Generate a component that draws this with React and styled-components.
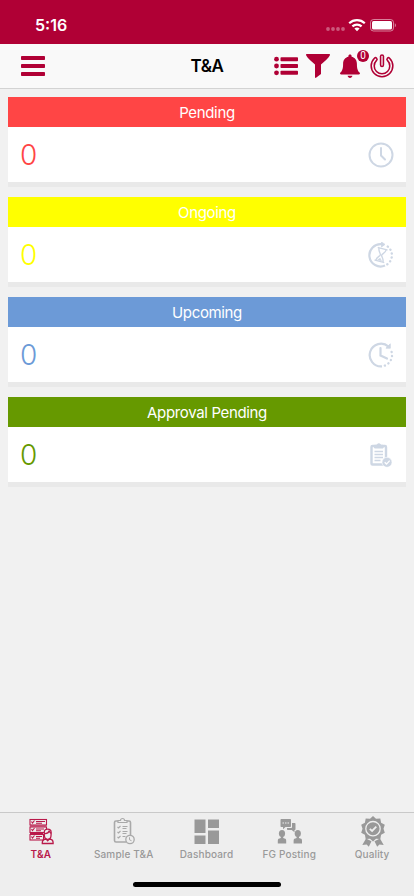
import React from "react";
import styled, { createGlobalStyle } from "styled-components";

const GlobalStyle = createGlobalStyle`
  * {
    box-sizing: border-box;
  }

  body {
    margin: 0;
    background: #f1f1f1;
    font-family: Inter, "Liberation Sans", sans-serif;
  }
`;

const Screen = styled.div`
  display: flex;
  flex-direction: column;
  width: 414px;
  height: 896px;
  overflow: hidden;
  background: #f1f1f1;
`;

const StatusBar = styled.div`
  display: flex;
  justify-content: space-between;
  height: 44px;
  padding: 15px 17px 0 35px;
  background: #b00035;
  color: #fff;
`;

const Time = styled.span`
  font-size: 16px;
  font-weight: 600;
  line-height: 20px;
`;

const NavBar = styled.header`
  display: grid;
  grid-template-columns: 1fr auto 1fr;
  align-items: center;
  height: 45px;
  padding: 0 20px 0 21px;
  background: #f9f9f9;
  border-bottom: 1px solid #d3d3d3;
  color: #b00035;
`;

const Title = styled.h1`
  margin: 0 1px 0 0;
  color: #000;
  font-size: 17px;
  font-weight: 600;
  letter-spacing: -0.5px;
`;

const NavActions = styled.div`
  display: flex;
  justify-content: flex-end;
  gap: 8px;
`;

const IconButton = styled.button`
  position: relative;
  display: block;
  width: 24px;
  height: 24px;
  padding: 0;
  border: 0;
  background: none;
  color: inherit;

  svg {
    display: block;
  }
`;

const Badge = styled.span`
  position: absolute;
  top: -4px;
  right: -7px;
  width: 12px;
  height: 12px;
  border-radius: 50%;
  background: #b00035;
  color: #fff;
  font-family: Roboto, sans-serif;
  font-size: 10px;
  line-height: 12px;
  text-align: center;
`;

const Content = styled.main`
  flex: 1;
  display: flex;
  flex-direction: column;
  gap: 10px;
  padding: 8px;
`;

const Card = styled.section`
  color: ${(props) => props.$color};
  background: #fff;
  border-bottom: 5px solid #e9e9e9;
`;

const CardHeader = styled.h2`
  height: 30px;
  margin: 0;
  padding-top: 1px;
  background: ${(props) => props.$color};
  color: #fff;
  font-size: 15px;
  font-weight: 400;
  line-height: 30px;
  letter-spacing: -0.35px;
  text-align: center;
`;

const CardBody = styled.div`
  display: flex;
  align-items: center;
  justify-content: space-between;
  height: 55px;
  padding: 0 12px;
`;

const Count = styled.span`
  font-size: 28px;
  font-weight: 350;
  line-height: 30px;
`;

const TabBar = styled.nav`
  display: grid;
  grid-template-columns: repeat(5, 1fr);
  height: 70px;
  padding-top: 3px;
  background: #eee;
  border-top: 1px solid #c9c9c9;
`;

const Tab = styled.a`
  display: flex;
  flex-direction: column;
  align-items: center;
  color: ${(props) => (props.$active ? "#b9194a" : "#999")};

  svg {
    display: block;
  }
`;

const TabLabel = styled.span`
  padding-right: 1px;
  font-size: 10px;
  font-weight: ${(props) => (props.$active ? 600 : 500)};
  line-height: 12px;
  letter-spacing: 0.15px;
  white-space: nowrap;
`;

const HomeArea = styled.div`
  display: flex;
  justify-content: center;
  height: 14px;
  background: #eee;
`;

const HomeIndicator = styled.div`
  width: 148px;
  height: 5px;
  border-radius: 3px;
  background: #000;
`;

const StatusIcons = () => (
  <svg width="72" height="20" viewBox="0 0 72 20">
    <g fill="#fff" opacity="0.35">
      <circle cx="3" cy="14" r="1.9" />
      <circle cx="8" cy="14" r="1.9" />
      <circle cx="13" cy="14" r="1.9" />
      <circle cx="18" cy="14" r="1.9" />
    </g>
    <g fill="none" stroke="#fff" strokeWidth="2.2">
      <path d="M24.2 8.2a11.5 11.5 0 0 1 15.6 0" />
      <path d="M27.4 11.4a6.8 6.8 0 0 1 9.2 0" />
    </g>
    <path d="M29.4 13.6a3.8 3.8 0 0 1 5.2 0L32 16.2z" fill="#fff" />
    <rect x="45.5" y="4.5" width="23" height="11.5" rx="3" fill="none" stroke="#fff" opacity="0.5" />
    <rect x="47" y="6" width="20" height="8.5" rx="1.6" fill="#fff" />
    <path d="M69.8 8.2v4c1.6-.6 1.6-3.4 0-4z" fill="#fff" opacity="0.5" />
  </svg>
);

const MenuIcon = () => (
  <svg width="24" height="24" viewBox="0 0 24 24" fill="currentColor">
    <rect y="2" width="24" height="4" rx="0.8" />
    <rect y="10" width="24" height="4" rx="0.8" />
    <rect y="18" width="24" height="4" rx="0.8" />
  </svg>
);

const ListIcon = () => (
  <svg width="24" height="24" viewBox="0 0 24 24" fill="currentColor">
    <circle cx="2.5" cy="5.2" r="2.4" />
    <circle cx="2.5" cy="12" r="2.4" />
    <circle cx="2.5" cy="18.8" r="2.4" />
    <rect x="6.5" y="3.2" width="17.5" height="4" rx="0.8" />
    <rect x="6.5" y="10" width="17.5" height="4" rx="0.8" />
    <rect x="6.5" y="16.8" width="17.5" height="4" rx="0.8" />
  </svg>
);

const FilterIcon = () => (
  <svg width="24" height="24" viewBox="0 0 24 24" fill="currentColor">
    <path d="M.7 0h22.6c.7 0 .9.7.6 1.2-1 1.9-2.1 3.2-3.8 4.7L15 10.6V20L10 23.8c-.5.3-1 .1-1-.5V10.6L3.9 5.9C2.2 4.4 1.1 3.1.1 1.2-.2.7 0 0 .7 0z" />
  </svg>
);

const BellIcon = () => (
  <svg width="24" height="24" viewBox="0 0 24 24" fill="currentColor">
    <path d="M12 .4c1 0 1.6.7 1.6 1.6v.8c3.3.7 5.3 3.4 5.3 6.9 0 4.8.8 7.1 2.7 8.9.8.8.3 1.9-.8 1.9H3.2c-1.1 0-1.6-1.1-.8-1.9 1.900-1.800 2.700-4.100 2.700-8.900 0-3.500 2-6.200 5.300-6.900V2c0-.9.6-1.600 1.600-1.600z" />
    <path d="M9.600 21.800h4.800c-.3 1.300-1.200 2.100-2.400 2.100s-2.100-.8-2.400-2.100z" />
  </svg>
);

const PowerIcon = () => (
  <svg width="24" height="24" viewBox="0 0 24 24" fill="none" stroke="currentColor" strokeLinecap="round">
    <path d="M5.5 5.3A9.3 9.3 0 1 0 18.5 5.3" strokeWidth="4.6" />
    <path d="M5.5 5.3A9.3 9.3 0 1 0 18.5 5.3" stroke="#f9f9f9" strokeWidth="1.5" />
    <path d="M12 2.5v8.5" strokeWidth="4.4" />
    <path d="M12 2.5v8.5" stroke="#f9f9f9" strokeWidth="1.3" />
  </svg>
);

const CARD_ICON = "#ced7e4";

const ClockIcon = () => (
  <svg width="26" height="26" viewBox="0 0 26 26" fill="none" stroke={CARD_ICON} strokeWidth="2">
    <circle cx="13" cy="13" r="11.5" />
    <path d="M13 6v7.5l4 4" strokeLinecap="round" />
  </svg>
);

const HourglassIcon = () => (
  <svg width="26" height="26" viewBox="0 0 26 26" fill="none" stroke={CARD_ICON} strokeWidth="2.2">
    <path d="M17 23.6A11.2 11.2 0 1 1 14 2.2" />
    <path d="M13.5 0l3.5 2.4-3.5 2.6z" fill={CARD_ICON} strokeWidth="0.8" />
    <path d="M19 4A11.2 11.2 0 0 1 17 23.6" strokeDasharray="0.1 3.9" strokeDashoffset="-1" strokeLinecap="round" strokeWidth="2.4" />
    <g transform="rotate(15 13 13)" strokeWidth="1.4">
      <path d="M8.5 6.5h9M8.5 19.5h9" strokeLinecap="round" />
      <path d="M9.3 6.5c0 4 3 4.800 3 6.500s-3 2.500-3 6.500M16.700 6.500c0 4-3 4.800-3 6.500s3 2.500 3 6.500" />
      <path d="M11 18.500l2-2.200 2 2.200z" fill={CARD_ICON} strokeWidth="0.5" />
    </g>
  </svg>
);

const UpcomingIcon = () => (
  <svg width="26" height="26" viewBox="0 0 26 26" fill="none" stroke={CARD_ICON} strokeWidth="2.2">
    <path d="M14 24.3A11.3 11.3 0 1 1 20.5 4.6" />
    <path d="M22.3 1.8v4.4h-4.4z" fill={CARD_ICON} strokeWidth="0.8" />
    <path d="M23.3 9A11.3 11.3 0 0 1 14 24.3" strokeDasharray="0.1 4" strokeDashoffset="-1" strokeLinecap="round" strokeWidth="2.4" />
    <path d="M12.5 6v7.5l6.5 3" strokeLinecap="round" />
  </svg>
);

const ApprovalIcon = () => (
  <svg width="26" height="26" viewBox="0 0 26 26" fill="none" stroke={CARD_ICON}>
    <rect x="3.5" y="4" width="14.5" height="18.5" rx="1" strokeWidth="2.4" />
    <path d="M6.5 6V3.3h2.200a2.200 2.200 0 0 1 4.200 0h2.200V6z" fill={CARD_ICON} />
    <path d="M6.5 9.5h8.500M6.500 12.500h8.500M6.500 15.500h8.500M6.500 18.500h6" strokeWidth="1.5" />
    <circle cx="19" cy="20.3" r="5" fill={CARD_ICON} stroke="#fff" strokeWidth="0.6" />
    <path d="M16.7 20.3l1.800 1.800 3.200-3.500" stroke="#fff" strokeWidth="1.4" />
  </svg>
);

const TaskIcon = () => (
  <svg width="32" height="32" viewBox="0 0 32 32" fill="none" stroke="currentColor" strokeWidth="1.1">
    <rect x="5" y="3.5" width="16.5" height="5.5" />
    <rect x="5" y="11" width="16.5" height="5.5" />
    <rect x="5" y="18.5" width="13.5" height="5.5" />
    <path d="M6.5 5.5l1 1.5 2-2.500M6.500 13l1 1.500 2-2.500M6.500 20.500l1 1.500 2-2.500" />
    <path d="M11 5.500h9M11 7.300h6M11 13h8M11 14.800h5M11 20.500h6M11 22.300h4M5 10h16.500M5 17.500h13" />
    <path d="M19.3 18.5v-2.300c0-4 6.800-4 6.800 0v2.300c0 4-1.700 5-3.400 5s-3.400-1-3.400-5z" fill="#eee" strokeWidth="1.3" />
    <path d="M19.3 17.5c3 .3 4.400-1 4.900-2.500l1.900 2.500M17.300 27.500v-1c0-2.500 1.900-3.300 3.800-3.500l1.600 1.700 1.600-1.700c2 .2 3.800 1 3.800 3.500v1z" fill="#eee" strokeWidth="1.3" />
  </svg>
);

const SampleIcon = () => (
  <svg width="32" height="32" viewBox="0 0 32 32" fill="none" stroke="currentColor" opacity="0.8">
    <path d="M10 5H8a1.5 1.5 0 0 0-1.5 1.5v18A1.5 1.5 0 0 0 8 26h10.5M19 5h2a1.5 1.5 0 0 1 1.5 1.5V19" strokeWidth="1.6" />
    <path d="M10 6.5V4.5h2.5a2 2 0 0 1 4 0H19v2z" strokeWidth="1.2" />
    <path d="M9.5 11l1 1 2-2M9.5 16l1 1 2-2M9.5 21l1 1 2-2M14.5 10.5h5M14.5 12.5h4M14.5 15.5h5M14.5 17.5h4M14.5 20.5h3" strokeWidth="1.1" />
    <circle cx="22" cy="23.5" r="4.2" fill="#eee" strokeWidth="1.3" />
    <path d="M21.5 21.3v2.5l2 .9" />
  </svg>
);

const DashboardIcon = () => (
  <svg width="32" height="32" viewBox="0 0 32 32" fill="currentColor">
    <path d="M3.500 3.500h11v13.500h-11zM17 3.500h11v8.500H17zM3.500 19.500h11v8.500h-11zM17 14.500h11V28H17z" />
  </svg>
);

const PostingIcon = () => (
  <svg width="32" height="32" viewBox="0 0 32 32" fill="currentColor">
    <path d="M18 7h2.5c.6 0 1 .4 1 1v5c0 .6-.4 1-1 1v2.200L17.700 14H14c-.6 0-1-.4-1-1v-1h4c.6 0 1-.4 1-1z" />
    <path d="M7.5 3H16c.6 0 1 .4 1 1v6c0 .6-.4 1-1 1h-4.500L9 13.200V11H7.500c-.6 0-1-.4-1-1V4c0-.6.4-1 1-1z" />
    <path d="M8.5 7H10M11 7h1.5M13.5 7H15" stroke="#eee" />
    <ellipse cx="8" cy="17.5" rx="3.1" ry="3.5" />
    <path d="M3.800 27.500v-2.800c0-1.800 1-2.200 3-2.700V20h2.400v2c2 .5 3 .9 3 2.700v2.800z" />
    <ellipse cx="23.8" cy="17.5" rx="3.1" ry="3.5" />
    <path d="M19.600 27.500v-2.800c0-1.800 1-2.200 3-2.700V20H25v2c2 .5 3 .9 3 2.700v2.800z" />
  </svg>
);

const QualityIcon = () => (
  <svg width="32" height="32" viewBox="0 0 32 32" fill="currentColor">
    <path d="M9 22.500l5.500 2.800-2.700 5.500-2.200-2.300-4.300.5zM23 22.500l-5.500 2.800 2.700 5.500 2.200-2.300 4.300.5z" />
    <path d="M16 0l3 2.700 4.300-.2.800 4.200 3.700 2-1.300 4 1.300 4-3.700 2-.8 4.200-4.300-.2-3 2.700-3-2.700-4.300.2-.8-4.200-3.700-2 1.300-4-1.300-4 3.700-2 .8-4.200 4.300.2z" />
    <circle cx="16" cy="12.7" r="7.2" fill="none" stroke="#eee" strokeWidth="1.3" />
    <path d="M12.8 12.8l2.300 2.200 4.200-4.300" fill="none" stroke="#eee" strokeWidth="1.8" />
  </svg>
);

const cards = [
  { title: "Pending", count: 0, color: "#ff4545", icon: <ClockIcon /> },
  { title: "Ongoing", count: 0, color: "#ffff00", icon: <HourglassIcon /> },
  { title: "Upcoming", count: 0, color: "#6c9ad7", icon: <UpcomingIcon /> },
  { title: "Approval Pending", count: 0, color: "#669900", icon: <ApprovalIcon /> },
];

const tabs = [
  { label: "T&A", icon: <TaskIcon />, active: true },
  { label: "Sample T&A", icon: <SampleIcon /> },
  { label: "Dashboard", icon: <DashboardIcon /> },
  { label: "FG Posting", icon: <PostingIcon /> },
  { label: "Quality", icon: <QualityIcon /> },
];

function App() {
  return (
    <Screen>
      <GlobalStyle />
      <StatusBar>
        <Time>5:16</Time>
        <StatusIcons />
      </StatusBar>
      <NavBar>
        <IconButton aria-label="Menu">
          <MenuIcon />
        </IconButton>
        <Title>T&amp;A</Title>
        <NavActions>
          <IconButton aria-label="List">
            <ListIcon />
          </IconButton>
          <IconButton aria-label="Filter">
            <FilterIcon />
          </IconButton>
          <IconButton aria-label="Notifications">
            <BellIcon />
            <Badge>0</Badge>
          </IconButton>
          <IconButton aria-label="Log out">
            <PowerIcon />
          </IconButton>
        </NavActions>
      </NavBar>
      <Content>
        {cards.map((card) => (
          <Card key={card.title} $color={card.color}>
            <CardHeader $color={card.color}>{card.title}</CardHeader>
            <CardBody>
              <Count>{card.count}</Count>
              {card.icon}
            </CardBody>
          </Card>
        ))}
      </Content>
      <TabBar>
        {tabs.map((tab) => (
          <Tab key={tab.label} $active={tab.active}>
            {tab.icon}
            <TabLabel $active={tab.active}>{tab.label}</TabLabel>
          </Tab>
        ))}
      </TabBar>
      <HomeArea>
        <HomeIndicator />
      </HomeArea>
    </Screen>
  );
}

export default App;
